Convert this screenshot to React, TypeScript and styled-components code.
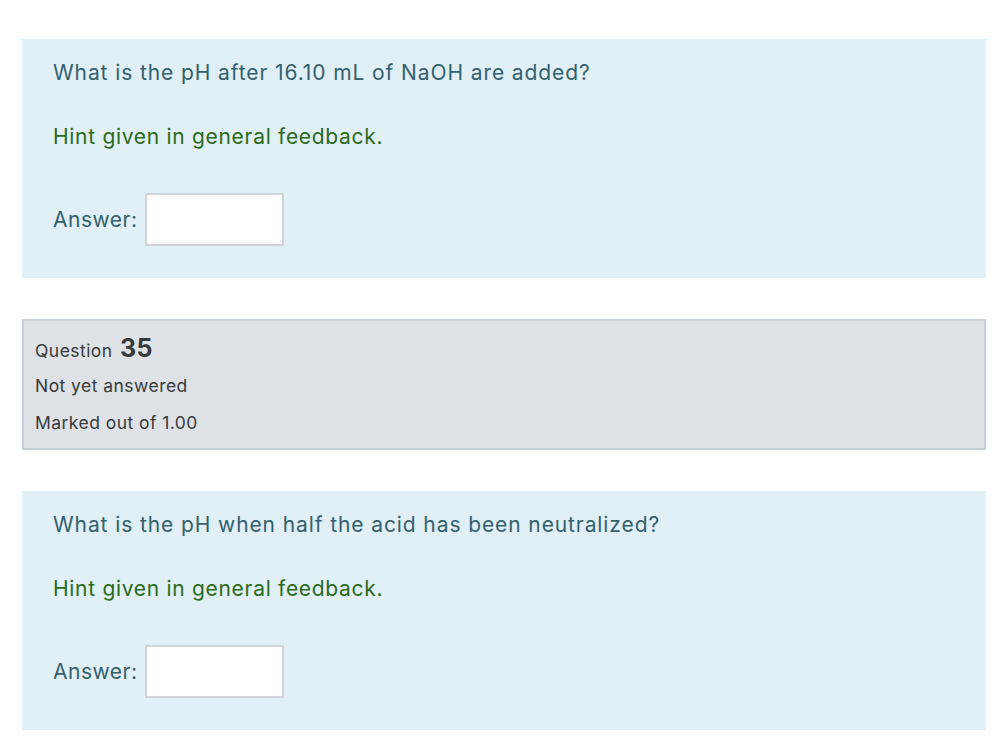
import React from 'react';
import styled, { createGlobalStyle } from 'styled-components';

const GlobalStyle = createGlobalStyle`
  body {
    margin: 0;
    background: #ffffff;
    font-family: Inter, "Liberation Sans", sans-serif;
  }
`;

const Page = styled.div`
  display: flex;
  flex-direction: column;
  padding: 39px 14px 0 22px;
  width: 964px;
`;

const QuestionBox = styled.div<{ $gap?: number }>`
  background: #e1eff7;
  padding: 19px 31px 32px 31px;
  margin-bottom: ${(p) => p.$gap ?? 0}px;
  display: flex;
  flex-direction: column;
`;

const QuestionText = styled.p`
  margin: 0;
  font-size: 21px;
  letter-spacing: 0.9px;
  line-height: 30px;
  color: #32616f;
`;

const Hint = styled.p`
  margin: 34px 0 0 0;
  font-size: 21px;
  letter-spacing: 0.7px;
  line-height: 30px;
  color: #2a6b1c;
`;

const AnswerRow = styled.div`
  display: flex;
  align-items: center;
  gap: 7px;
  margin-top: 41px;
`;

const AnswerLabel = styled.label`
  font-size: 21px;
  letter-spacing: 0.5px;
  color: #32616f;
`;

const AnswerInput = styled.input`
  width: 139px;
  height: 53px;
  box-sizing: border-box;
  border: 2px solid #ced4da;
  background: #ffffff;
  outline: none;
`;

const InfoBox = styled.div`
  background: #dee2e6;
  border: 2px solid #cad0d7;
  padding: 15px 11px 12px 11px;
  margin-bottom: 41px;
  color: #373a3c;
  display: flex;
  flex-direction: column;
  gap: 11px;
`;

const InfoLine = styled.div`
  font-size: 17.5px;
  letter-spacing: 0.45px;
  line-height: 26px;
  height: 26px;
`;

const QNumber = styled.span`
  font-size: 25px;
  font-weight: 700;
  line-height: 1;
  margin-left: 2px;
  letter-spacing: 0.3px;
`;

const Question: React.FC<{ text: string; gap?: number }> = ({ text, gap }) => (
  <QuestionBox $gap={gap}>
    <QuestionText>{text}</QuestionText>
    <Hint>Hint given in general feedback.</Hint>
    <AnswerRow>
      <AnswerLabel>Answer:</AnswerLabel>
      <AnswerInput type="text" />
    </AnswerRow>
  </QuestionBox>
);

const App: React.FC = () => (
  <>
    <GlobalStyle />
    <Page>
      <Question text="What is the pH after 16.10 mL of NaOH are added?" gap={41} />
      <InfoBox>
        <InfoLine>
          Question <QNumber>35</QNumber>
        </InfoLine>
        <InfoLine>Not yet answered</InfoLine>
        <InfoLine>Marked out of 1.00</InfoLine>
      </InfoBox>
      <Question text="What is the pH when half the acid has been neutralized?" />
    </Page>
  </>
);

export default App;
